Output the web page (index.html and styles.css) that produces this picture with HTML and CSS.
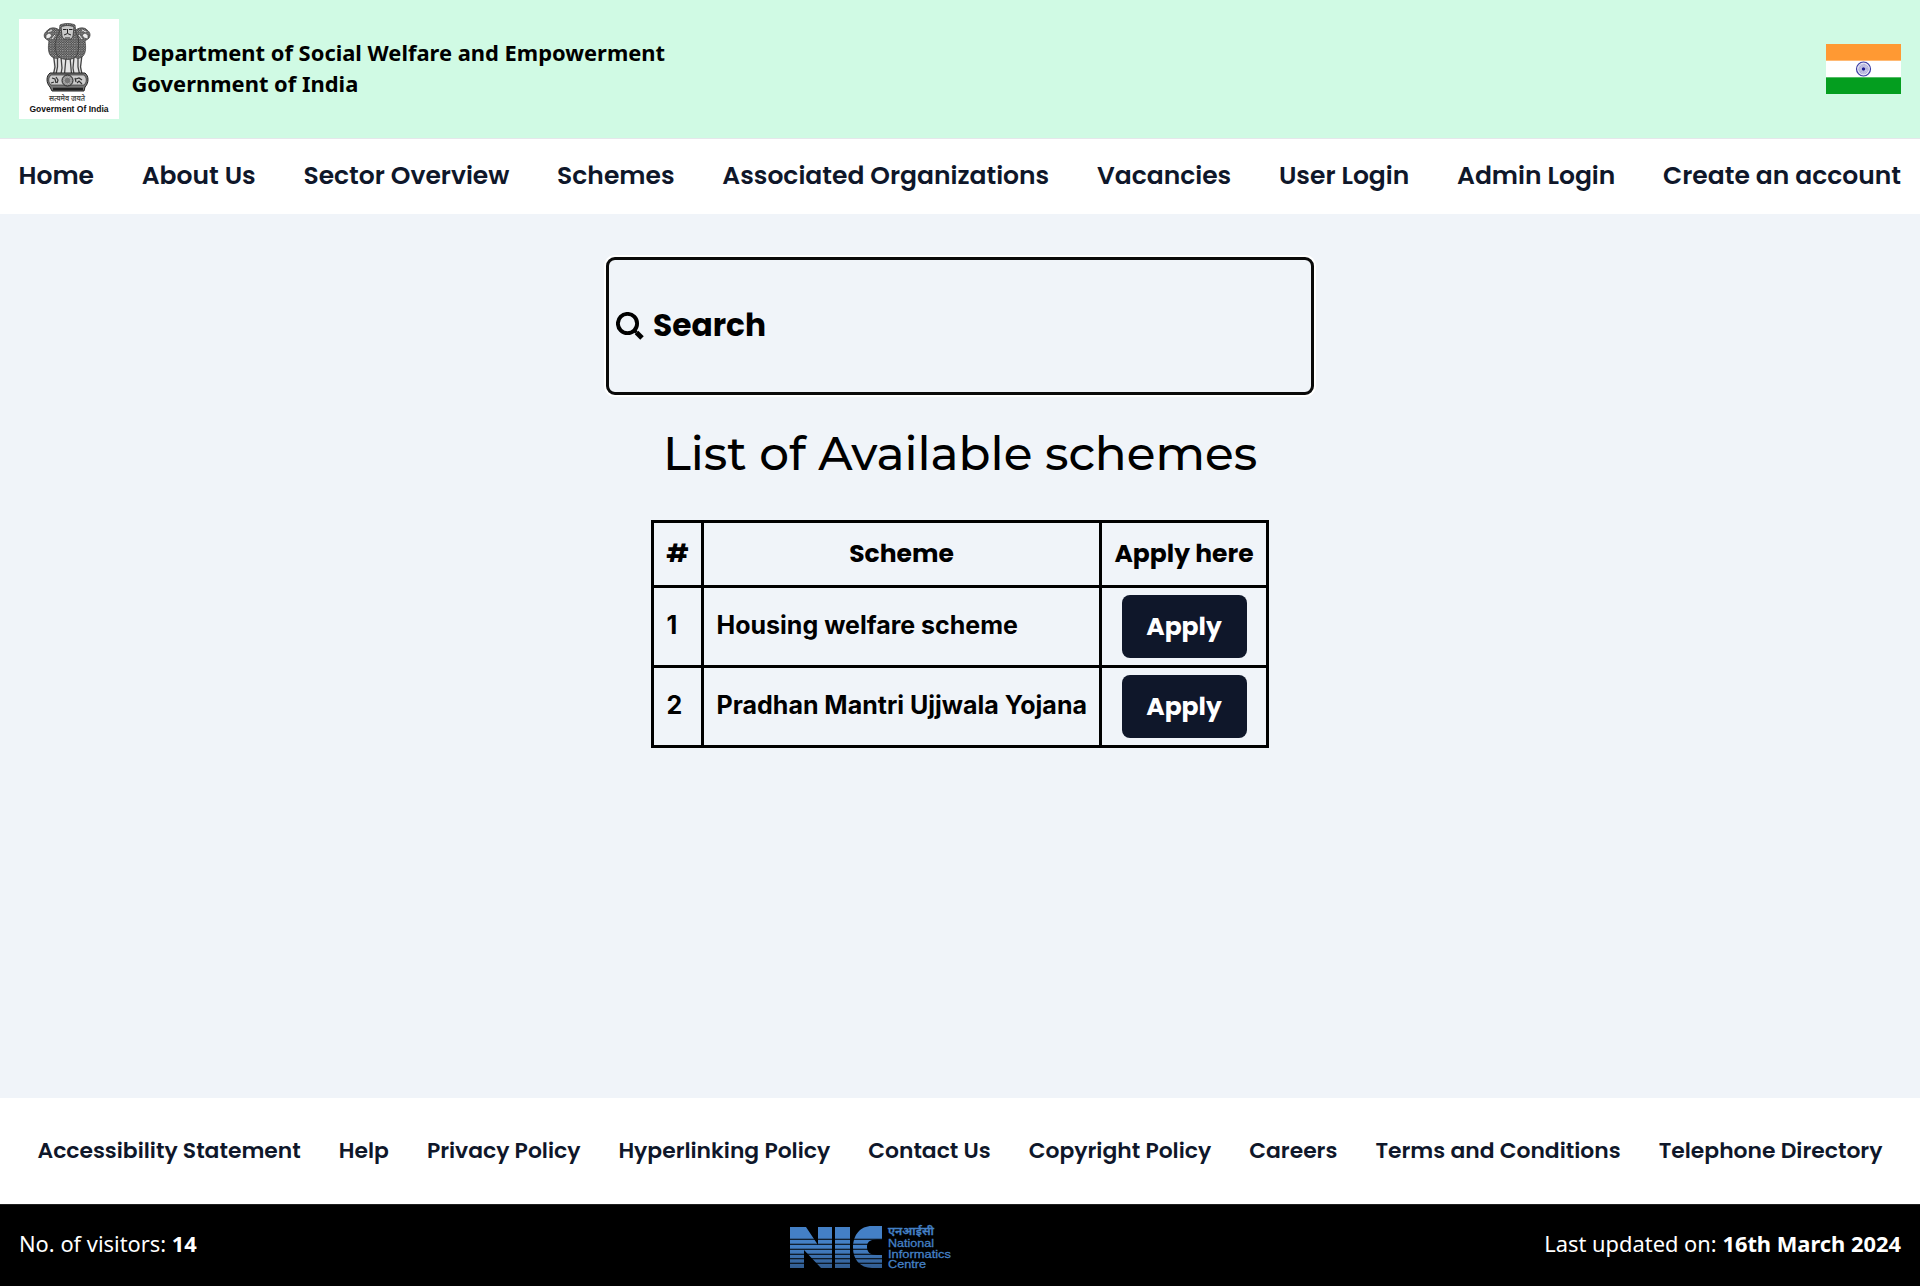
FILE: index.html
```
<!DOCTYPE html>
<html lang="en">
<head>
<meta charset="utf-8">
<title>Department of Social Welfare and Empowerment</title>
<link rel="stylesheet" href="styles.css">
</head>
<body>
<header class="masthead">
  <svg class="emblem" viewBox="0 0 100 100" role="img" aria-label="Emblem of India">
    <defs>
      <pattern id="fur" width="2.4" height="2.4" patternUnits="userSpaceOnUse">
        <rect width="2.4" height="2.4" fill="#444"/>
        <circle cx=".7" cy=".7" r=".65" fill="#c5c5c5"/>
        <circle cx="1.9" cy="1.9" r=".55" fill="#999"/>
      </pattern>
    </defs>
    <rect width="100" height="100" fill="#fff"/>
    <!-- legs -->
    <path d="M34 35h29l-1 20H35z" fill="#e4e4e4"/>
    <path d="M34.500 36l1.500 12-1.500 7M38.500 38v10l-1.500 7M42 38l1 11-1 6M47 38l-1.500 17M51 38l1.500 17M55 38l-1 11 1 6M59 38v10l1.500 7M63 36l-1.500 12 1.500 7" fill="none" stroke="#444" stroke-width="1.300"/>
    <!-- side lions -->
    <path d="M41 12c-3-4-10-4-12-1-3 2-5 5-3 8l4 3c-1 6-1 12 2 15 4 4 9 2 10 0zM56 12c3-4 10-4 12-1 3 2 4 5 2 8l-4 3c1 6 1 12-2 15-4 4-8 2-9 0z" fill="url(#fur)" stroke="#333" stroke-width=".7"/>
    <path d="M27 16l3-2 3 2-2 3-4 1zM69 16l-3-2-3 2 2 3 4 1z" fill="#eee" stroke="#333" stroke-width=".6"/>
    <path d="M29 13l4-2M67 13l-4-2M33 20l3-4M63 20l-3-4" stroke="#eee" stroke-width="1"/>
    <!-- centre lion -->
    <path d="M41 6c4-2 11-2 15 0l1 8c4 6 3 16 1 22-3 6-16 6-20 0-3-7-2-16 2-22z" fill="url(#fur)" stroke="#333" stroke-width=".7"/>
    <path d="M42 8c4-2 9-2 13 0l-1 9c-1 5-10 5-11 0z" fill="#c8c8c8" stroke="#333" stroke-width=".8"/>
    <path d="M44 10.500h3.500M50 10.500h3.500M48.500 10v4M45 16q3.500-3 7 0M46 19h5" fill="none" stroke="#222" stroke-width="1"/>
    <!-- abacus -->
    <path d="M31 54h35c4 3 4 10 0 14l-1 4H33l-2-4c-4-4-4-11 0-14z" fill="#777" stroke="#222"/>
    <path d="M32 56h33c3 3 3 7 0 10H32c-3-3-3-7 0-10z" fill="#ccc" stroke="#333" stroke-width=".7"/>
    <circle cx="48.500" cy="61.500" r="5.500" fill="#999" stroke="#222"/>
    <circle cx="48.500" cy="61.500" r="3.200" fill="#777" stroke="#ddd" stroke-width=".6" stroke-dasharray="1 .7"/>
    <path d="M33 59l3 1 1 4M37 58l2 3-1 3M32 64l3-1M57 60l3-1 3 2M58 64l2-2 3 3M56 59l1 4" fill="none" stroke="#333" stroke-width="1.200"/>
    <path d="M34 70h30" stroke="#222" stroke-width="2.600"/>
    <text class="emblem-motto" x="48" y="81.500" text-anchor="middle" textLength="36" lengthAdjust="spacingAndGlyphs">सत्यमेव जयते</text>
    <text class="emblem-name" x="50" y="92.500" text-anchor="middle" textLength="79" lengthAdjust="spacingAndGlyphs">Goverment Of India</text>
  </svg>
  <div class="dept">
    <p>Department of Social Welfare and Empowerment</p>
    <p>Government of India</p>
  </div>
  <svg class="flag" viewBox="0 0 75 50" role="img" aria-label="Flag of India">
    <rect width="75" height="50" fill="#fff"/>
    <rect width="75" height="16.670" fill="#ff9933"/>
    <rect y="33.330" width="75" height="16.670" fill="#049e1f"/>
    <circle cx="37.500" cy="25" r="7" fill="#e9e9f5" stroke="#3c3ca4" stroke-width="1.200"/>
    <circle cx="37.500" cy="25" r="3.500" fill="none" stroke="#9c9cd0" stroke-width="3.500" stroke-dasharray=".55 .37"/>
    <circle cx="37.500" cy="25" r="1.700" fill="#1c1c90"/>
  </svg>
</header>
<nav class="mainnav">
  <a>Home</a><a>About Us</a><a>Sector Overview</a><a>Schemes</a><a>Associated Organizations</a><a>Vacancies</a><a>User Login</a><a>Admin Login</a><a>Create an account</a>
</nav>
<main class="content">
  <div class="search">
    <svg class="search-icon" viewBox="0 0 28 28" fill="none" stroke="#000" stroke-width="3.900">
      <circle cx="11.500" cy="11.500" r="9.600"/>
      <path d="M18 18l2.500 2.500" stroke-width="3.400"/>
      <path d="M20.500 20.500l5.500 5.500" stroke-width="5" stroke-linecap="butt"/>
    </svg>
    <span class="search-label">Search</span>
  </div>
  <h1 class="title">List of Available schemes</h1>
  <table class="schemes">
    <colgroup><col class="col-no"><col class="col-name"><col class="col-apply"></colgroup>
    <thead><tr><th>#</th><th>Scheme</th><th>Apply here</th></tr></thead>
    <tbody>
      <tr><td>1</td><td>Housing welfare scheme</td><td class="action"><button class="apply">Apply</button></td></tr>
      <tr><td>2</td><td>Pradhan Mantri Ujjwala Yojana</td><td class="action"><button class="apply">Apply</button></td></tr>
    </tbody>
  </table>
</main>
<nav class="footnav">
  <a>Accessibility Statement</a><a>Help</a><a>Privacy Policy</a><a>Hyperlinking Policy</a><a>Contact Us</a><a>Copyright Policy</a><a>Careers</a><a>Terms and Conditions</a><a>Telephone Directory</a>
</nav>
<footer class="bottom">
  <p>No. of visitors: <b>14</b></p>
  <svg class="nic" viewBox="0 0 162 48" role="img" aria-label="National Informatics Centre">
    <defs>
      <linearGradient id="fade" x1="0" y1="0" x2="0" y2="1">
        <stop offset=".5" stop-color="#4480c6"/><stop offset="1" stop-color="#315c90"/>
      </linearGradient>
    </defs>
    <path fill="url(#fade)" d="M0 5h16l12 18V5h14v41H31L14 28v18H0zM45 5h15v41H45zM92 4v13.500h-5c-8 0-10 3-10 7.500 0 5 3 8 10 8h5v13H82c-12 0-19-9-19-20 0-13 7-22 19-22z"/>
    <path d="M0 17.200h92M0 22.200h92M0 27.200h92M0 32.200h92M0 36.800h92M0 41.200h92" stroke="#000" stroke-width="1.100"/>
    <g class="nic-words">
      <text class="nic-hindi" x="98" y="12.500" textLength="46" lengthAdjust="spacingAndGlyphs">एनआईसी</text>
      <text x="98" y="25" textLength="46" lengthAdjust="spacingAndGlyphs">National</text>
      <text x="98" y="35.500" textLength="63" lengthAdjust="spacingAndGlyphs">Informatics</text>
      <text x="98" y="46" textLength="38" lengthAdjust="spacingAndGlyphs">Centre</text>
    </g>
  </svg>
  <p>Last updated on: <b>16th March 2024</b></p>
</footer>
</body>
</html>
```
FILE: styles.css
```
* { box-sizing: border-box; }
body {
  margin: 0;
  height: 1287px;
  display: flex;
  flex-direction: column;
  background: #fff;
  color: #000;
  font-family: "Noto Sans", sans-serif;
}
p, h1 { margin: 0; }

.masthead {
  flex: none;
  height: 139px;
  display: flex;
  align-items: center;
  padding: 0 19px;
  background: #d0fae4;
  border-bottom: 1px solid #e5e7eb;
}
.emblem { width: 100px; height: 100px; }
.emblem-motto { font: 600 7.5px "Noto Sans", sans-serif; fill: #444; }
.emblem-name { font: 700 8.5px "Liberation Sans", Arial, sans-serif; fill: #111; }
.dept { margin-left: 12.5px; padding-bottom: 2px; font-size: 21.92px; font-weight: 700; line-height: 31px; }
.flag { width: 75px; height: 50px; margin-left: auto; }

.mainnav, .footnav {
  flex: none;
  display: flex;
  align-items: center;
  justify-content: space-between;
  font-family: Poppins, Inter, sans-serif;
  font-weight: 600;
  color: #0f172a;
}
.mainnav { height: 75px; padding: 0 19px 2px 18.5px; font-size: 25px; }

.content {
  flex: none;
  height: 884px;
  padding-top: 43px;
  display: flex;
  flex-direction: column;
  align-items: center;
  background: #f0f4f9;
}
.search {
  width: 708px;
  height: 138px;
  display: flex;
  align-items: center;
  gap: 9px;
  padding-left: 7px;
  border: 3px solid #0a0a0a;
  border-radius: 9px;
  box-shadow: 0 0 0 2px #fff;
  font: 700 31.25px Poppins, Inter, sans-serif;
}
.search-icon { width: 28px; height: 28px; }
.search-label { padding-bottom: 2px; }
.title {
  margin-top: 30px;
  font: 500 46.875px/58px Montserrat, Inter, sans-serif;
}
.schemes {
  margin-top: 37px;
  width: 618px;
  table-layout: fixed;
  border-collapse: collapse;
  font: 700 25px/36px Inter, sans-serif;
}
.col-no { width: 50px; }
.col-name { width: 398px; }
.col-apply { width: 167px; }
.schemes th, .schemes td { border: 3px solid #000; padding: 0 12px 4px 12.5px; height: 80px; text-align: left; white-space: nowrap; }
.schemes th { height: 65px; padding: 0 12px; font-family: Poppins, Inter, sans-serif; text-align: center; }
.schemes .action { text-align: center; padding: 0; }
.apply {
  display: block;
  width: 125px;
  height: 63px;
  margin: 0 auto;
  border: 0;
  border-radius: 8px;
  background: #0f172a;
  color: #fff;
  font: 700 25px Poppins, Inter, sans-serif;
}

.footnav { height: 106px; padding: 0 37.5px 1px; font-size: 21.875px; }
.bottom {
  flex: none;
  height: 82px;
  display: grid;
  grid-template-columns: 1fr 162px 1fr;
  align-items: center;
  padding: 0 19px;
  background: #000;
  border-top: 1px solid #1f1f1f;
  color: #fff;
  font-size: 21.875px;
  line-height: 30px;
}
.bottom p { padding-bottom: 3px; }
.bottom p:last-child { text-align: right; }
.nic { width: 162px; height: 48px; position: relative; left: -89px; }
.nic-words { font: 400 11.5px "Liberation Sans", Arial, sans-serif; fill: #4480c6; stroke: #4480c6; stroke-width: .3; }
.nic-hindi { font: 600 11.5px "Noto Sans", sans-serif; }
```
